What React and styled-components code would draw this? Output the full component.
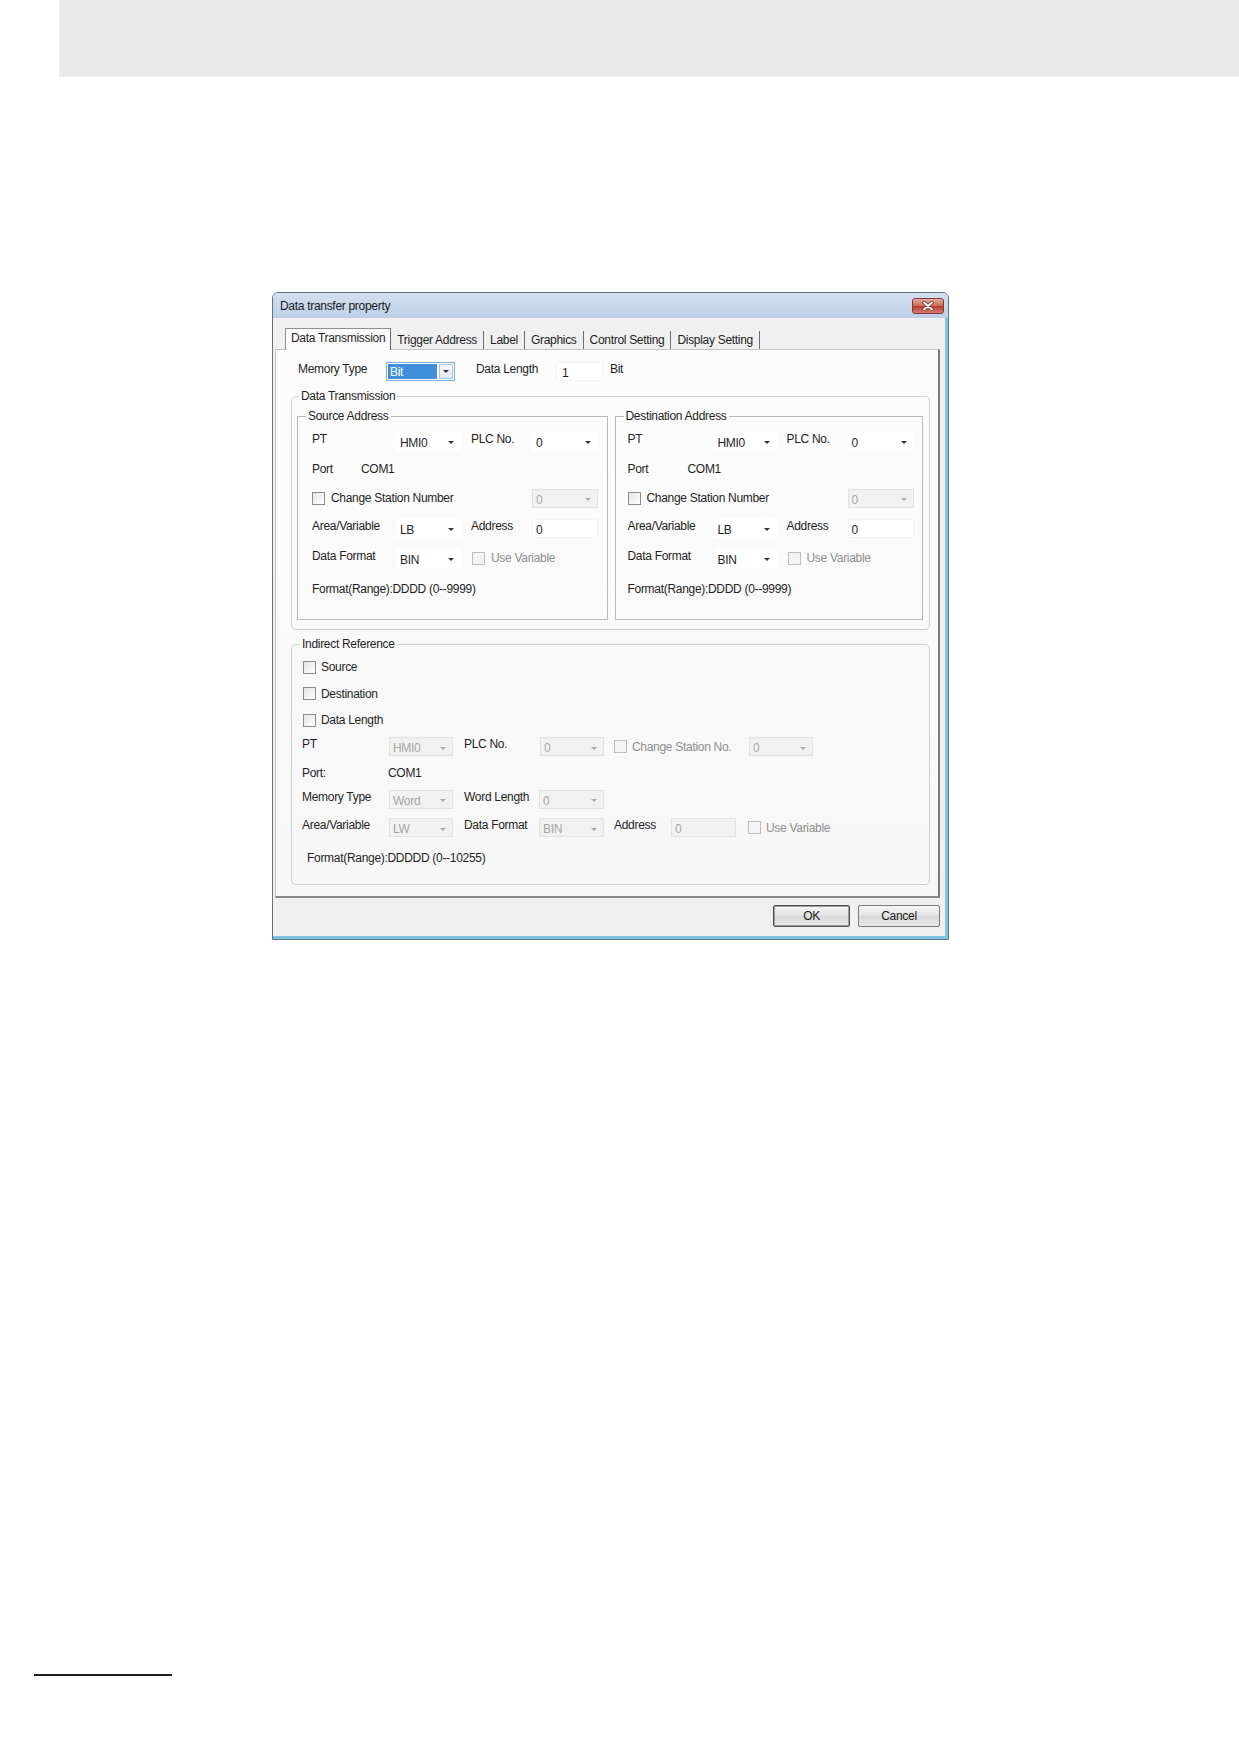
import React from "react";
import styled, { createGlobalStyle } from "styled-components";

const GlobalStyle = createGlobalStyle`
  body {
    margin: 0;
    background: #ffffff;
    font-family: "Liberation Sans", Arial, sans-serif;
    font-size: 12px;
    letter-spacing: -0.3px;
    color: #1f1f1f;
  }
`;

const TABS = [
  "Data Transmission",
  "Trigger Address",
  "Label",
  "Graphics",
  "Control Setting",
  "Display Setting",
];

const sourceLayout = { pad: 14, label: 84, combo: 65, mid: 71, combo2: 66, port: 49 };
const destLayout = { pad: 12, label: 86, combo: 63, mid: 71, combo2: 66, port: 60 };

function Combo({ w, value, disabled }) {
  return (
    <ComboBox $w={w} $disabled={disabled}>
      <span>{value}</span>
      <Arrow $disabled={disabled} />
    </ComboBox>
  );
}

function Check({ text, disabled, gap = 5, dim }) {
  return (
    <CheckWrap $gap={gap} $dim={dim}>
      <Box $disabled={disabled} />
      <span>{text}</span>
    </CheckWrap>
  );
}

function AddressBox({ title, l }) {
  const changeWidth = l.label + l.combo + l.mid;
  return (
    <AddressSet $left={l.pad}>
      <Legend $ml={-4 - (l.pad - 12)}>{title}</Legend>
      <Row $h={28}>
        <Label $w={l.label} $raise>PT</Label>
        <Combo w={l.combo} value="HMI0" />
        <Label $w={l.mid} $pl={10} $raise>PLC No.</Label>
        <Combo w={l.combo2} value="0" />
      </Row>
      <Row $h={28}>
        <Label $w={l.port}>Port</Label>
        <Label>COM1</Label>
      </Row>
      <Row $h={30}>
        <Cell $w={changeWidth}>
          <Check text="Change Station Number" gap={6} />
        </Cell>
        <Combo w={l.combo2} value="0" disabled />
      </Row>
      <Row $h={30}>
        <Label $w={l.label} $raise>Area/Variable</Label>
        <Combo w={l.combo} value="LB" />
        <Label $w={l.mid} $pl={10} $raise>Address</Label>
        <TextBox $w={l.combo2}>0</TextBox>
      </Row>
      <Row $h={30}>
        <Label $w={l.label} $raise>Data Format</Label>
        <Combo w={l.combo} value="BIN" />
        <Cell $w={l.mid + l.combo2} $pl={11}>
          <Check text="Use Variable" disabled dim gap={6} />
        </Cell>
      </Row>
      <Row $h={32}>
        <Label>Format(Range):DDDD (0--9999)</Label>
      </Row>
    </AddressSet>
  );
}

export default function App() {
  return (
    <Page>
      <GlobalStyle />
      <HeaderBand />

      <Window>
        <TitleBar>
          <span>Data transfer property</span>
          <CloseButton>
            <svg width="14" height="10" viewBox="0 0 14 10">
              <path d="M3 1.5 L11 8.5 M11 1.5 L3 8.5" stroke="#6b2a24" strokeWidth="3.4" strokeLinecap="round" />
              <path d="M3 1.5 L11 8.5 M11 1.5 L3 8.5" stroke="#ffffff" strokeWidth="2" strokeLinecap="round" />
            </svg>
          </CloseButton>
        </TitleBar>

        <Body>
          <TabStrip>
            {TABS.map((t, i) => (
              <Tab key={t} $active={i === 0}>{t}</Tab>
            ))}
          </TabStrip>

          <Panel>
            <MemoryRow>
              <Label $w={88} $raise>Memory Type</Label>
              <BitCombo>
                <BitValue>Bit</BitValue>
                <BitButton><Arrow /></BitButton>
              </BitCombo>
              <Label $w={101} $pl={21} $raise>Data Length</Label>
              <TextBox $w={47} $pl={5}>1</TextBox>
              <Label $pl={7} $raise>Bit</Label>
            </MemoryRow>

            <DataGroup>
              <Legend $ml={2}>Data Transmission</Legend>
              <AddressPair>
                <AddressBox title="Source Address" l={sourceLayout} />
                <AddressBox title="Destination Address" l={destLayout} />
              </AddressPair>
            </DataGroup>

            <IndirectGroup>
              <Legend $ml={-2}>Indirect Reference</Legend>
              <Row $h={26} $pl={1}><Check text="Source" /></Row>
              <Row $h={27} $pl={1}><Check text="Destination" /></Row>
              <Row $h={26} $pl={1}><Check text="Data Length" /></Row>
              <Row $h={27}>
                <Label $w={87} $raise>PT</Label>
                <Combo w={64} value="HMI0" disabled />
                <Label $w={87} $pl={11} $raise>PLC No.</Label>
                <Combo w={64} value="0" disabled />
                <Cell $w={145} $pl={10}>
                  <Check text="Change Station No." disabled dim />
                </Cell>
                <Combo w={64} value="0" disabled />
              </Row>
              <Row $h={25}>
                <Label $w={86}>Port:</Label>
                <Label>COM1</Label>
              </Row>
              <Row $h={28}>
                <Label $w={87} $raise>Memory Type</Label>
                <Combo w={64} value="Word" disabled />
                <Label $w={86} $pl={11} $raise>Word Length</Label>
                <Combo w={65} value="0" disabled />
              </Row>
              <Row $h={29}>
                <Label $w={87} $raise>Area/Variable</Label>
                <Combo w={64} value="LW" disabled />
                <Label $w={86} $pl={11} $raise>Data Format</Label>
                <Combo w={65} value="BIN" disabled />
                <Label $w={67} $pl={10} $raise>Address</Label>
                <TextBox $w={65} $disabled>0</TextBox>
                <Cell $pl={12}>
                  <Check text="Use Variable" disabled dim />
                </Cell>
              </Row>
              <Row $h={32} $pl={5}>
                <Label>Format(Range):DDDDD (0--10255)</Label>
              </Row>
            </IndirectGroup>
          </Panel>

          <ButtonRow>
            <PushButton $w={77} $default>OK</PushButton>
            <PushButton $w={82}>Cancel</PushButton>
          </ButtonRow>
        </Body>
      </Window>

      <FooterRule />
    </Page>
  );
}

const Page = styled.div`
  width: 1239px;
  min-height: 1754px;
  display: flex;
  flex-direction: column;
`;

const HeaderBand = styled.div`
  margin-left: 59px;
  height: 77px;
  background: #e9e9e9;
`;

const Window = styled.div`
  margin: 215px 0 0 272px;
  width: 677px;
  height: 648px;
  box-sizing: border-box;
  border: 1px solid #66727f;
  border-radius: 6px 6px 0 0;
  background: #f0f0f0;
  box-shadow: inset -3px -3px 0 #7cc3e4;
  display: flex;
  flex-direction: column;
  overflow: hidden;
`;

const TitleBar = styled.div`
  height: 25px;
  flex: none;
  display: flex;
  align-items: center;
  justify-content: space-between;
  padding: 0 4px 0 7px;
  background: linear-gradient(#d3e1f0, #bccfe5);
  color: #1a1a1a;
  font-size: 12px;
`;

const CloseButton = styled.div`
  width: 32px;
  height: 16px;
  box-sizing: border-box;
  border: 1px solid #7d3a34;
  border-radius: 3px;
  background: linear-gradient(#e8aa9e, #cf6a5c 48%, #b9392b 52%, #d67e70);
  display: flex;
  align-items: center;
  justify-content: center;
`;

const Body = styled.div`
  flex: 1;
  display: flex;
  flex-direction: column;
  padding: 10px 8px 0 2px;
`;

const TabStrip = styled.div`
  display: flex;
  align-items: flex-end;
  height: 22px;
  padding-left: 10px;
  margin-bottom: -1px;
  position: relative;
  z-index: 1;
`;

const Tab = styled.div`
  box-sizing: border-box;
  white-space: nowrap;
  ${(p) =>
    p.$active
      ? `
    height: 22px;
    line-height: 19px;
    padding: 0 5px;
    background: #fbfbfb;
    border: 1px solid #8f8f8f;
    border-bottom: none;
    border-right-color: #6a6a6a;
  `
      : `
    height: 18px;
    line-height: 18px;
    margin-bottom: 1px;
    padding: 0 6px 0 6px;
    border-right: 1px solid #6f6f6f;
  `}
`;

const Panel = styled.div`
  height: 549px;
  box-sizing: border-box;
  border: 1px solid #c2c2c2;
  border-right: 2px solid #7b7b7b;
  border-bottom: 2px solid #878787;
  background: linear-gradient(#fcfcfc, #f7f7f7);
  padding: 10px 8px 0 15px;
`;

const MemoryRow = styled.div`
  display: flex;
  align-items: center;
  height: 22px;
  padding-left: 7px;
`;

const Cell = styled.div`
  flex: none;
  box-sizing: border-box;
  white-space: nowrap;
  ${(p) => (p.$w ? `width: ${p.$w}px;` : "")}
  padding-left: ${(p) => p.$pl || 0}px;
`;

const Label = styled(Cell)`
  padding-bottom: ${(p) => (p.$raise ? 5 : 0)}px;
`;

const BitCombo = styled.div`
  width: 69px;
  height: 19px;
  box-sizing: border-box;
  display: flex;
  border: 1px solid #7aaee3;
  background: #ffffff;
  padding: 1px;
  gap: 2px;
`;

const BitValue = styled.div`
  flex: 1;
  background: #3f8fdd;
  color: #ffffff;
  padding: 2px 0 0 2px;
  line-height: 13px;
`;

const BitButton = styled.div`
  width: 14px;
  box-sizing: border-box;
  border: 1px solid #a9c4e3;
  background: linear-gradient(#f4f8fd, #dde9f7);
  display: flex;
  align-items: center;
  justify-content: center;
`;

const Arrow = styled.span`
  flex: none;
  width: 0;
  height: 0;
  border-left: 3px solid transparent;
  border-right: 3px solid transparent;
  border-top: 3px solid ${(p) => (p.$disabled ? "#a8a8a8" : "#333333")};
`;

const ComboBox = styled.div`
  flex: none;
  width: ${(p) => p.$w}px;
  height: 19px;
  box-sizing: border-box;
  display: flex;
  align-items: center;
  justify-content: space-between;
  padding: 3px 6px 0 3px;
  background: ${(p) => (p.$disabled ? "#f1f1f1" : "#ffffff")};
  border: 1px solid ${(p) => (p.$disabled ? "#e2e2e2" : "#ffffff")};
  color: ${(p) => (p.$disabled ? "#a6a6a6" : "#1f1f1f")};
`;

const TextBox = styled.div`
  flex: none;
  width: ${(p) => p.$w}px;
  height: 19px;
  box-sizing: border-box;
  padding: 3px 0 0 ${(p) => p.$pl || 3}px;
  background: ${(p) => (p.$disabled ? "#f1f1f1" : "#ffffff")};
  border: 1px solid ${(p) => (p.$disabled ? "#e2e2e2" : "#f4f4f4")};
  color: ${(p) => (p.$disabled ? "#a6a6a6" : "#1f1f1f")};
`;

const CheckWrap = styled.div`
  display: flex;
  align-items: center;
  gap: ${(p) => p.$gap}px;
  white-space: nowrap;
  color: ${(p) => (p.$dim ? "#8e8e8e" : "#1f1f1f")};
`;

const Box = styled.span`
  flex: none;
  width: 13px;
  height: 13px;
  box-sizing: border-box;
  border: 1px solid ${(p) => (p.$disabled ? "#bdbdbd" : "#8c8c8c")};
  background: ${(p) =>
    p.$disabled ? "#f4f4f4" : "linear-gradient(135deg, #e4e4e4, #ffffff)"};
`;

const Fieldset = styled.fieldset`
  margin: 0;
  min-width: 0;
  box-sizing: border-box;
`;

const Legend = styled.legend`
  margin-left: ${(p) => p.$ml}px;
  padding: 0 2px;
  line-height: 14px;
  font-size: 12px;
`;

const DataGroup = styled(Fieldset)`
  margin-top: 7px;
  padding: 6px 6px 9px 5px;
  border: 1px solid #cfcfcf;
  border-radius: 5px;
`;

const AddressPair = styled.div`
  display: flex;
  gap: 7px;
`;

const AddressSet = styled(Fieldset)`
  flex: 1;
  padding: 4px 8px 14px ${(p) => p.$left}px;
  border: 1px solid #b8b8b8;
`;

const IndirectGroup = styled(Fieldset)`
  margin-top: 7px;
  padding: 3px 8px 10px 10px;
  border: 1px solid #cfcfcf;
  border-radius: 5px;
`;

const Row = styled.div`
  display: flex;
  align-items: center;
  height: ${(p) => p.$h}px;
  padding-left: ${(p) => p.$pl || 0}px;
`;

const ButtonRow = styled.div`
  display: flex;
  justify-content: flex-end;
  gap: 8px;
  margin-top: 7px;
`;

const PushButton = styled.div`
  width: ${(p) => p.$w}px;
  height: 22px;
  box-sizing: border-box;
  border: 1px solid ${(p) => (p.$default ? "#4f4f4f" : "#7a7a7a")};
  box-shadow: ${(p) => (p.$default ? "inset 0 0 0 1px #9c9c9c" : "none")};
  border-radius: 2px;
  background: linear-gradient(#f6f6f6, #e2e2e2 50%, #d8d8d8 51%, #e8e8e8);
  display: flex;
  align-items: center;
  justify-content: center;
  color: #1a1a1a;
`;

const FooterRule = styled.div`
  margin: 734px 0 0 34px;
  width: 138px;
  height: 2px;
  background: #1e1e1e;
`;
